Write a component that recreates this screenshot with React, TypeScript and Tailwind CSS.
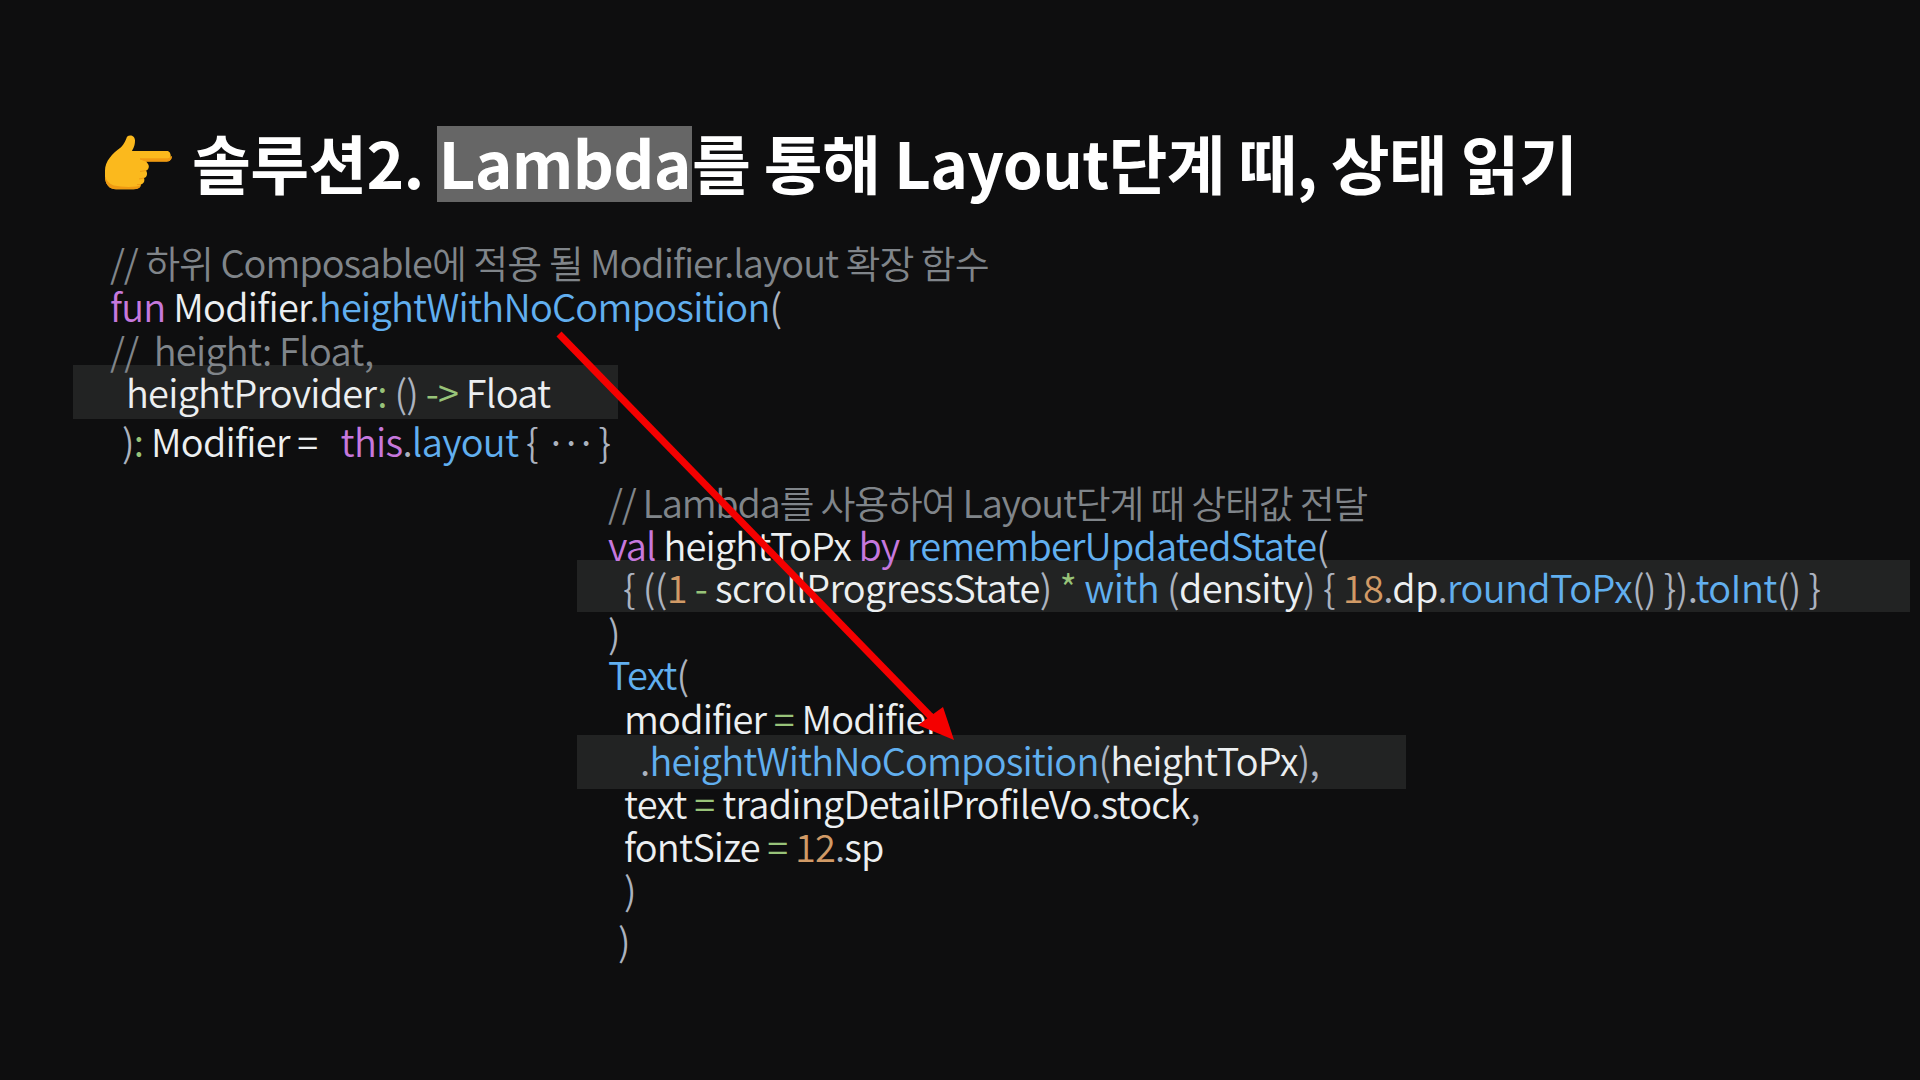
const B = ({ children }: { children: React.ReactNode }) => <span className="text-[#61afef]">{children}</span>;
const P = ({ children }: { children: React.ReactNode }) => <span className="text-[#c678dd]">{children}</span>;
const G = ({ children }: { children: React.ReactNode }) => <span className="text-[#98c379]">{children}</span>;
const O = ({ children }: { children: React.ReactNode }) => <span className="text-[#d19a66]">{children}</span>;
const D = ({ children }: { children: React.ReactNode }) => <span className="text-[#abb2bf]">{children}</span>;

function Hand() {
  return (
    <svg width="70" height="58" viewBox="0 0 70 62" preserveAspectRatio="none" className="shrink-0">
      <path d="M3 38 C3 28 10 20 19 13 C22 10 24 5 25 2 C28 -1 33 1 33 6 C33 12 31 15 30 17 L65 17 C70 17 70 28 65 28 L44 28 L46 31 C48 34 46 38 44 38 C46 41 45 45 42 46 C43 49 42 52 39 53 C38 58 34 58 30 58 L14 58 C7 58 3 52 3 44 Z" fill="#fbb91d" />
      <path d="M44 28 L65 28 C68 28 69.5 26 69.5 23 C68 25 66 25.5 64 25.5 L38 25.5 Z M44 38 L38 39 M42 46 L37 47 M39 53 L35 53" fill="#f19a13" stroke="#f19a13" strokeWidth="1" />
      <path d="M3 44 C3 52 7 58 14 58 L30 58 C34 58 37 58 39 54 C34 56 20 56 12 54 C7 52 4 48 3 44 Z" fill="#ef9a12" />
    </svg>
  );
}

export default function App() {
  return (
    <div className="relative w-[1920px] h-[1080px] overflow-hidden bg-[#0e0e0f] text-[#eceff1] font-['Noto_Sans_CJK_KR',sans-serif]">
      <div className="flex items-center h-[76px] ml-[102px] pt-[126px] box-content gap-[20px]">
        <Hand />
        <h1 className="text-[64px] leading-[70px] font-bold text-white whitespace-pre tracking-[-0.72px]">
          솔루션2. <span className="inline-block bg-[#666666] h-[76px] leading-[70px] align-top px-[1px]">Lambda</span>를 통해 Layout단계 때, 상태 읽기
        </h1>
      </div>

      <div className="pt-[40px] text-[38px] font-[350] tracking-[-0.85px] whitespace-pre">
        <div className="ml-[73px]">
          <div className="h-[43px] leading-[39px] pl-[37px] text-[#80858a] tracking-[-1.03px]">// 하위 Composable에 적용 될 Modifier.layout 확장 함수</div>
          <div className="h-[43px] leading-[41px] pl-[37px] tracking-[-0.78px]"><P>fun</P> Modifier<D>.</D><B>heightWithNoComposition</B><D>(</D></div>
          <div className="relative z-10 h-[37px] leading-[43px] pl-[37px] text-[#80858a] tracking-[-0.76px]">//  height: Float,</div>
          <div className="h-[54px] leading-[54px] w-[545px] pl-[53px] bg-[#222323] tracking-[-0.77px]">heightProvider<G>:</G> <D>()</D> <G>-&gt;</G> Float</div>
          <div className="h-[48px] leading-[44px] pl-[49px] tracking-[-0.75px]"><D>)</D><G>:</G> Modifier =   <P>this</P><D>.</D><B>layout</B> <D>{"{ "}<span className="tracking-[-6px]">···</span>{" }"}</D></div>
        </div>
        <div className="ml-[577px] mt-[15px]">
          <div className="h-[43px] leading-[39px] pl-[31px] text-[#80858a] tracking-[-1.25px]">// Lambda를 사용하여 Layout단계 때 상태값 전달</div>
          <div className="relative z-10 h-[43px] leading-[39px] pl-[31px]"><P>val</P> heightToPx <P>by</P> <B>rememberUpdatedState</B><D>(</D></div>
          <div className="-mt-[8px] h-[52px] leading-[54px] w-[1333px] pl-[46px] bg-[#222323] tracking-[-0.62px]"><D>{"{ (("}</D><O>1</O> <G>-</G> scrollProgressState<D>)</D> <G>*</G> <B>with</B> <D>(</D>density<D>)</D> <D>{"{"}</D> <O>18</O><D>.</D>dp<D>.</D><B>roundToPx</B><D>()</D> <D>{"})"}</D><D>.</D><B>toInt</B><D>()</D> <D>{"}"}</D></div>
          <div className="h-[43px] leading-[39px] pl-[31px]"><D>)</D></div>
          <div className="h-[43px] leading-[37px] pl-[31px]"><B>Text</B><D>(</D></div>
          <div className="relative z-10 h-[43px] leading-[39px] pl-[47px]">modifier <G>=</G> Modifier<D>.</D></div>
          <div className="-mt-[6px] h-[54px] leading-[50px] w-[829px] pl-[63px] bg-[#222323]"><B><span className="text-[#abb2bf]">.</span>heightWithNoComposition</B><D>(</D>heightToPx<D>),</D></div>
          <div className="relative z-10 -mt-[4px] h-[43px] leading-[36px] pl-[47px] tracking-[-0.75px]">text <G>=</G> tradingDetailProfileVo<D>.</D>stock<D>,</D></div>
          <div className="h-[43px] leading-[36px] pl-[47px]">fontSize <G>=</G> <O>12</O><D>.</D>sp</div>
          <div className="h-[43px] leading-[36px] pl-[47px]"><D>)</D></div>
          <div className="h-[54px] leading-[51px] pl-[41px]"><D>)</D></div>
        </div>
      </div>

      <svg className="absolute inset-0 z-20 pointer-events-none" width="1920" height="1080" viewBox="0 0 1920 1080">
        <line x1="559" y1="334" x2="936" y2="722" stroke="#f40000" strokeWidth="7" />
        <polygon points="954,740 918,725 943,707" fill="#f40000" />
      </svg>
    </div>
  );
}
